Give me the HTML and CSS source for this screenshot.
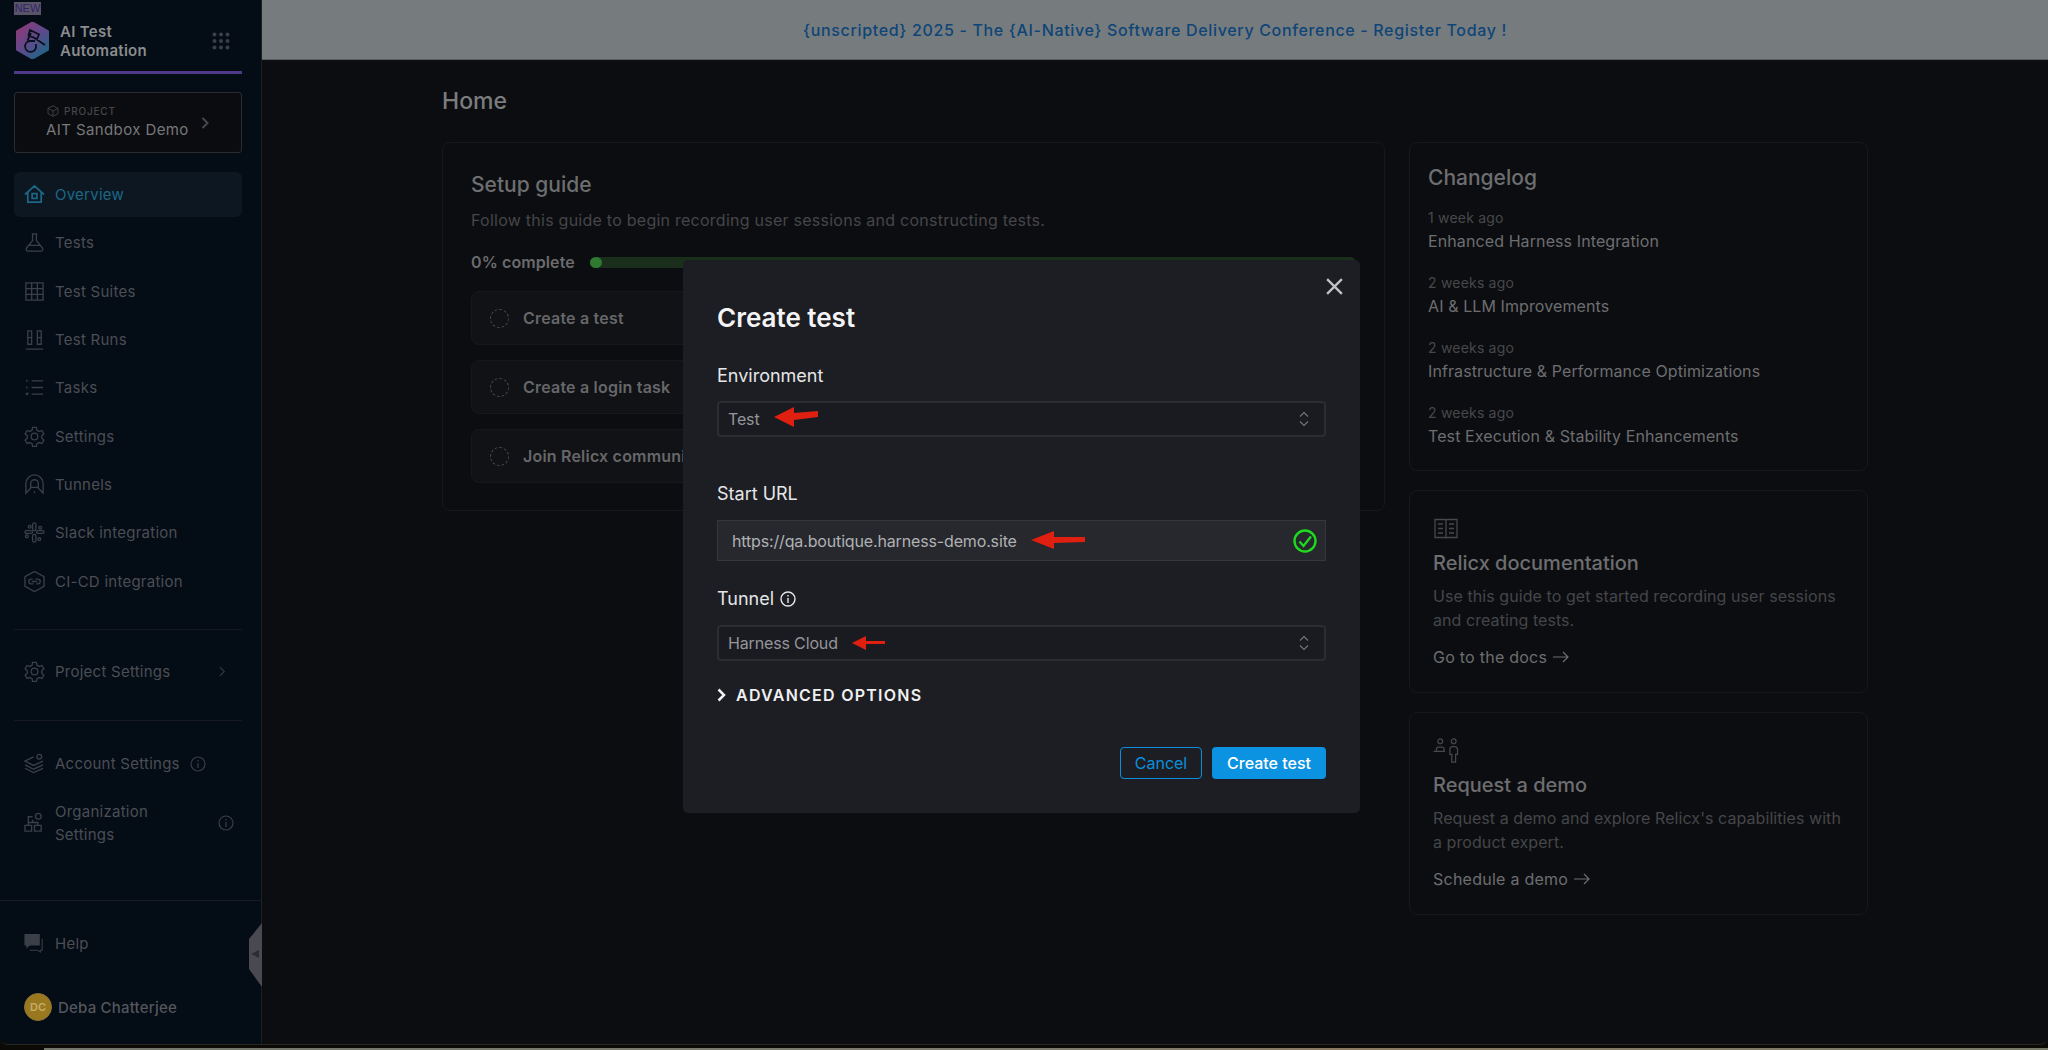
FILE: index.html
```html
<!DOCTYPE html>
<html lang="en">
<head>
  <meta charset="UTF-8">
  <title>AI Test Automation - Home</title>
  <link rel="stylesheet" href="styles.css">
</head>
<body>
  <div class="frame">
    <aside class="sidebar">
      <div class="brand">
        <span class="new-badge">NEW</span>
        <div class="brand-row">
          <svg class="logo" viewBox="0 0 35 37" width="35" height="37">
            <defs>
              <linearGradient id="logoGrad" x1="0.1" y1="0.1" x2="0.8" y2="1">
                <stop offset="0" stop-color="#8a3a78"/>
                <stop offset="0.5" stop-color="#5c4a8c"/>
                <stop offset="1" stop-color="#1f6684"/>
              </linearGradient>
            </defs>
            <path d="M17.500 1 32.500 9.500V27.500L17.500 36 2.500 27.500V9.500Z" fill="url(#logoGrad)" stroke="url(#logoGrad)" stroke-width="3" stroke-linejoin="round"/>
            <path d="M15 8 24 12.500 22 17 13.500 13.500ZM16 11 12.500 18.500M18 15 30 23M20 19H14.500A5.500 5.500 0 1 0 21 25.500V22" fill="none" stroke="#0a111d" stroke-width="1.800"/>
          </svg>
          <div class="brand-name">AI Test<br>Automation</div>
          <svg class="apps" viewBox="0 0 18 18" width="18" height="18">
            <g fill="#3b3f47">
              <circle cx="2.500" cy="2.500" r="2"/><circle cx="9" cy="2.500" r="2"/><circle cx="15.500" cy="2.500" r="2"/>
              <circle cx="2.500" cy="9" r="2"/><circle cx="9" cy="9" r="2"/><circle cx="15.500" cy="9" r="2"/>
              <circle cx="2.500" cy="15.500" r="2"/><circle cx="9" cy="15.500" r="2"/><circle cx="15.500" cy="15.500" r="2"/>
            </g>
          </svg>
        </div>
      </div>

      <div class="project">
        <div class="project-text">
          <div class="project-label">
            <svg viewBox="0 0 12 12" width="12" height="12" fill="none" stroke="#3d3f44">
              <path d="M6 .7 11 3.400v5.200L6 11.300 1 8.600V3.400Z M1 3.400 6 6l5-2.600 M6 6v5.300"/>
            </svg>
            PROJECT
          </div>
          <div class="project-name">AIT Sandbox Demo</div>
        </div>
        <svg class="project-arrow" viewBox="0 0 8 12" width="8" height="12" fill="none" stroke="#45484e" stroke-width="2"><path d="M1.500 1 6.500 6l-5 5"/></svg>
      </div>

      <nav class="nav">
        <a class="nav-item active">
          <svg class="nav-icon" viewBox="0 0 22 22"><path d="M1 11 11 2l10 9M4 9v10h14V9M8.500 10h5v5h-5z"/></svg>
          Overview
        </a>
        <a class="nav-item">
          <svg class="nav-icon" viewBox="0 0 22 22"><path d="M8 2h6M9 2v7L2.500 17a2 2 0 0 0 1.500 3h14a2 2 0 0 0 1.500-3L13 9V2M5.500 14h11"/></svg>
          Tests
        </a>
        <a class="nav-item">
          <svg class="nav-icon" viewBox="0 0 22 22"><path d="M2 2h18v18H2zM8 2v18M14 2v18M2 8h18M2 14h18"/></svg>
          Test Suites
        </a>
        <a class="nav-item">
          <svg class="nav-icon" viewBox="0 0 22 22"><path d="M4 2h4v14H4zM14 2h4v14h-4zM4 9h4M14 9h4M2 21h18"/></svg>
          Test Runs
        </a>
        <a class="nav-item">
          <svg class="nav-icon" viewBox="0 0 22 22"><path d="M8 4h12M8 11h12M8 18h12M3 3v2M3 10v2M2 17l1 1.500 1.500-2"/></svg>
          Tasks
        </a>
        <a class="nav-item">
          <svg class="nav-icon" viewBox="0 0 22 22"><circle cx="11" cy="11" r="3.500"/><path d="M9 1.500h4l.6 3 2.400 1.200 2.800-1 2 3.500-2.200 2v2.600l2.200 2-2 3.500-2.800-1-2.400 1.200-.6 3H9l-.6-3L6 17.300l-2.800 1-2-3.500 2.200-2v-2.600l-2.200-2 2-3.500 2.800 1L8.400 4.500Z"/></svg>
          Settings
        </a>
        <a class="nav-item">
          <svg class="nav-icon" viewBox="0 0 22 22"><path d="M2 20V10a9 9 0 0 1 18 0v10L15 15V10a4 4 0 0 0-8 0v5ZM7 14h8M11 18v2"/></svg>
          Tunnels
        </a>
        <a class="nav-item">
          <svg class="nav-icon" viewBox="0 0 22 22"><rect x="9" y="1" width="3.500" height="8" rx="1.700"/><rect x="1" y="9" width="8" height="3" rx="1.500"/><rect x="13" y="9" width="8" height="3" rx="1.500"/><rect x="9" y="13" width="3.500" height="8" rx="1.700"/><circle cx="6" cy="5" r="1.500"/><circle cx="17" cy="6" r="1.500"/><circle cx="3" cy="15" r="1.500"/><circle cx="16" cy="18" r="1.500"/></svg>
          Slack integration
        </a>
        <a class="nav-item">
          <svg class="nav-icon" viewBox="0 0 22 22"><path d="M11 .5 21 6v10l-10 5.500L1 16V6Z"/><path d="M12 8.500h2.500a2.500 2.500 0 0 1 0 5H13M10 13.500H7.500a2.500 2.500 0 0 1 0-5H9M8 11h6"/></svg>
          CI-CD integration
        </a>
      </nav>

      <div class="rule"></div>
      <a class="nav-item solo">
        <svg class="nav-icon" viewBox="0 0 22 22"><circle cx="11" cy="11" r="3.500"/><path d="M9 1.500h4l.6 3 2.400 1.200 2.800-1 2 3.500-2.200 2v2.600l2.200 2-2 3.500-2.800-1-2.400 1.200-.6 3H9l-.6-3L6 17.300l-2.800 1-2-3.500 2.200-2v-2.600l-2.200-2 2-3.500 2.800 1L8.400 4.500Z"/></svg>
        <span class="grow">Project Settings</span>
        <svg class="more" viewBox="0 0 8 12" width="7" height="11"><path d="M1 1l5 5-5 5"/></svg>
      </a>
      <div class="rule"></div>

      <a class="nav-item account">
        <svg class="nav-icon" viewBox="0 0 22 22"><path d="M10 4 1 8.500l9 4.500 10-4.500M1 12.500 10 17l10-4.500M1 16l9 4.500 10-4.500"/><circle cx="16" cy="4" r="2.500"/></svg>
        Account Settings
        <svg class="info" viewBox="0 0 16 16"><circle cx="8" cy="8" r="7"/><path d="M8 7v5M8 4v1.400"/></svg>
      </a>
      <a class="nav-item org">
        <svg class="nav-icon" viewBox="0 0 22 22"><path d="M1 14h7v6H1zM11 14h7v6h-7zM4.500 14v-3h10v3M9 5H4.500v6M9 11V8"/><circle cx="15" cy="4.500" r="3"/></svg>
        <span class="grow">Organization<br>Settings</span>
        <svg class="info" viewBox="0 0 16 16"><circle cx="8" cy="8" r="7"/><path d="M8 7v5M8 4v1.400"/></svg>
      </a>

      <div class="side-foot">
        <a class="nav-item help">
          <svg class="nav-icon" viewBox="0 0 22 22"><path d="M1 1.500h15v11H6l-3 2.500v-2.500H1z" fill="#3b3f47"/><path d="M19 6v12h-2v2l-3-2H6"/></svg>
          Help
        </a>
        <div class="user">
          <span class="avatar">DC</span>
          <span class="user-name">Deba Chatterjee</span>
        </div>
      </div>
      <div class="collapse"><span class="collapse-tri"></span></div>
    </aside>

    <main class="main">
      <div class="banner">{unscripted} 2025 - The {AI-Native} Software Delivery Conference - Register Today !</div>
      <div class="content">
        <h1 class="page-title">Home</h1>
        <div class="columns">
          <section class="card setup">
            <h2 class="card-title">Setup guide</h2>
            <p class="muted">Follow this guide to begin recording user sessions and constructing tests.</p>
            <div class="progress-row">
              <span class="progress-label">0% complete</span>
              <div class="progress"><span class="progress-dot"></span></div>
            </div>
            <div class="step"><span class="step-circle"></span>Create a test</div>
            <div class="step"><span class="step-circle"></span>Create a login task</div>
            <div class="step"><span class="step-circle"></span>Join Relicx community</div>
          </section>

          <div class="side-col">
            <section class="card changelog">
              <h2 class="card-title">Changelog</h2>
              <div class="log"><span class="log-date">1 week ago</span><span class="log-title">Enhanced Harness Integration</span></div>
              <div class="log"><span class="log-date">2 weeks ago</span><span class="log-title">AI &amp; LLM Improvements</span></div>
              <div class="log"><span class="log-date">2 weeks ago</span><span class="log-title">Infrastructure &amp; Performance Optimizations</span></div>
              <div class="log"><span class="log-date">2 weeks ago</span><span class="log-title">Test Execution &amp; Stability Enhancements</span></div>
            </section>

            <section class="card promo">
              <svg class="promo-icon" viewBox="0 0 26 22"><path d="M2 2h10c.6 0 1 .4 1 1 0-.6.400-1 1-1h10v18H14l-1 .600L12 20H2zM13 3v17M5 6.500h5M5 11h5M5 15.500h5M16 6.500h5M16 11h5M16 15.500h5"/></svg>
              <h3 class="promo-title">Relicx documentation</h3>
              <p class="muted promo-text">Use this guide to get started recording user sessions and creating tests.</p>
              <a class="promo-link">Go to the docs
                <svg class="promo-arrow" viewBox="0 0 16 12"><path d="M0 6h15M10 1l5 5-5 5"/></svg>
              </a>
            </section>

            <section class="card promo">
              <svg class="promo-icon" viewBox="0 0 26 26"><circle cx="7" cy="3.500" r="2.500"/><circle cx="21" cy="3.500" r="2.500"/><path d="M0 14h12M3 14v-2.500a2 2 0 0 1 2-2h4a2 2 0 0 1 2 2V14M17 17v-5a3 3 0 0 1 3-3h2a3 3 0 0 1 3 3v5h-2v8h-4v-8z"/></svg>
              <h3 class="promo-title">Request a demo</h3>
              <p class="muted promo-text">Request a demo and explore Relicx's capabilities with a product expert.</p>
              <a class="promo-link">Schedule a demo
                <svg class="promo-arrow" viewBox="0 0 16 12"><path d="M0 6h15M10 1l5 5-5 5"/></svg>
              </a>
            </section>
          </div>
        </div>
      </div>
    </main>

    <div class="modal">
      <svg class="modal-close" viewBox="0 0 18 18"><path d="M2 2l14 14M16 2 2 16"/></svg>
      <h2 class="modal-title">Create test</h2>

      <label class="field-label env-label">Environment</label>
      <div class="select env-select">
        <span>Test</span>
        <svg class="red-arrow arrow-test" viewBox="0 0 44 24" width="44" height="24"><path d="M0 12 20 2v6l24-2v6l-24 3v7z"/></svg>
        <svg class="updown" viewBox="0 0 10 16"><path d="M1 5.500 5 1.500l4 4M1 10.500l4 4 4-4"/></svg>
      </div>

      <label class="field-label url-label">Start URL</label>
      <div class="input">
        <span>https://qa.boutique.harness-demo.site</span>
        <svg class="red-arrow arrow-url" viewBox="0 0 54 18" width="54" height="18"><path d="M0 9 23 0v6h31v5l-31 1v6z"/></svg>
        <svg class="check" viewBox="0 0 24 24"><circle cx="12" cy="12" r="10.500"/><path d="M6.500 12.500 10.500 17 18 7.500"/></svg>
      </div>

      <label class="field-label tunnel-label">Tunnel
        <svg class="label-info" viewBox="0 0 16 16"><circle cx="8" cy="8" r="7"/><path d="M8 7v5M8 4v1.400"/></svg>
      </label>
      <div class="select">
        <span>Harness Cloud</span>
        <svg class="red-arrow arrow-cloud" viewBox="0 0 33 14" width="33" height="14"><path d="M0 7 14 0v5h19v3H14v6z"/></svg>
        <svg class="updown" viewBox="0 0 10 16"><path d="M1 5.500 5 1.500l4 4M1 10.500l4 4 4-4"/></svg>
      </div>

      <div class="advanced">
        <svg viewBox="0 0 9 14" width="9" height="14"><path d="M1.500 1.500 7 7l-5.500 5.500"/></svg>
        ADVANCED OPTIONS
      </div>

      <div class="modal-actions">
        <button class="btn btn-outline">Cancel</button>
        <button class="btn btn-primary">Create test</button>
      </div>
    </div>
  </div>
  <div class="wallpaper"></div>
</body>
</html>
```

FILE: styles.css
```css
* {
  box-sizing: border-box;
}

html,
body {
  margin: 0;
  height: 1050px;
  overflow: hidden;
}

body {
  font-family: Inter, "Noto Sans", sans-serif;
  background-color: #0b0a07;
  color: #707173;
}

h1,
h2,
h3,
p {
  margin: 0;
}

.frame {
  position: relative;
  display: flex;
  height: 1045px;
  border-radius: 0 0 8px 8px;
  border-bottom: 1px solid #27271f;
  overflow: hidden;
  background-color: #0c0d10;
}

.wallpaper {
  height: 5px;
  margin-left: 44px;
  border-top: 3px solid #0b0a07;
  background: linear-gradient(90deg, #73776c, #7d7b6e 50%, #8a7a62 65%, #777a68);
}

/* sidebar */
.sidebar {
  position: relative;
  flex: 0 0 262px;
  display: flex;
  flex-direction: column;
  padding: 0 19px 0 14px;
  background-color: #040c16;
  border-right: 1px solid #1c1f24;
}

.brand {
  height: 74px;
  border-bottom: 3px solid #4f3a8a;
}

.new-badge {
  display: block;
  width: 27px;
  height: 13px;
  margin-top: 2px;
  background-color: #5a5468;
  color: #33246a;
  font-family: "Liberation Sans", sans-serif;
  font-size: 11px;
  line-height: 13px;
  text-align: center;
}

.brand-row {
  display: flex;
  align-items: center;
  height: 41px;
  margin-top: 5px;
}

.logo {
  flex: none;
  margin-left: 1px;
}

.brand-name {
  flex: 1;
  margin-left: 10px;
  color: #8b8c8e;
  font-size: 15px;
  font-weight: 600;
  line-height: 19px;
  letter-spacing: 0.3px;
}

.apps {
  margin-right: 12px;
}

.project {
  display: flex;
  align-items: center;
  height: 61px;
  margin-top: 18px;
  padding-left: 31px;
  border: 1px solid #2a2c30;
  border-radius: 3px;
  background-color: #0b0c0f;
}

.project-text {
  flex: 1;
}

.project-label {
  display: flex;
  align-items: center;
  gap: 5px;
  margin-left: 1px;
  color: #45474b;
  font-size: 10px;
  font-weight: 500;
  letter-spacing: 0.8px;
}

.project-name {
  margin-top: 3px;
  color: #77787a;
  font-size: 15px;
  letter-spacing: 0.4px;
  line-height: 20px;
}

.project-arrow {
  margin: 0 32px 0 0;
}

.nav {
  display: flex;
  flex-direction: column;
  gap: 3.33px;
  margin-top: 19px;
}

.nav-item {
  display: flex;
  align-items: center;
  gap: 10px;
  height: 45px;
  padding-left: 10px;
  border-radius: 6px;
  color: #4b4e54;
  font-size: 15px;
  letter-spacing: 0.25px;
}

.nav-item.active {
  background-color: #0c1722;
  color: #1c6786;
}

.nav-icon {
  flex: none;
  width: 21px;
  height: 21px;
  fill: none;
  stroke: #3b3f47;
  stroke-width: 1.4;
}

.active .nav-icon {
  stroke: #1c6786;
  stroke-width: 1.8;
}

.rule {
  height: 1px;
  margin: 25px 0 19px;
  background-color: #15191f;
}

.nav-item.solo {
  height: 46px;
}

.solo + .rule {
  margin: 25px 0 20px;
}

.grow {
  flex: 1;
}

.more {
  margin-right: 16px;
  fill: none;
  stroke: #3b3f47;
  stroke-width: 1.2;
}

.info {
  flex: none;
  width: 16px;
  height: 16px;
  fill: none;
  stroke: #3b3f47;
  stroke-width: 1.2;
}

.account {
  height: 46px;
}

.org {
  height: 60px;
  margin-top: 6px;
  line-height: 23px;
}

.org .info {
  margin-right: 8px;
}

.side-foot {
  margin: auto -19px 0 -14px;
  padding: 20px 19px 0 14px;
  height: 144px;
  border-top: 1px solid #1a1e24;
}

.help {
  height: 45px;
}

.help .nav-icon {
  stroke-width: 1.1;
}

.user {
  display: flex;
  align-items: center;
  gap: 6px;
  margin: 27px 0 0 10px;
}

.avatar {
  width: 28px;
  height: 28px;
  border-radius: 50%;
  border: 1px solid #8a7232;
  background-color: #9a7820;
  color: #c5ae68;
  font-size: 11px;
  font-weight: 600;
  line-height: 26px;
  text-align: center;
}

.user-name {
  color: #54565c;
  font-size: 15px;
  font-weight: 500;
  letter-spacing: 0.2px;
}

.collapse {
  position: absolute;
  right: -1px;
  top: 923px;
  width: 13px;
  height: 64px;
  background-color: #4a4952;
  clip-path: polygon(100% 0, 0 25%, 0 72%, 100% 100%);
}

.collapse-tri {
  position: absolute;
  top: 27px;
  left: 2px;
  border: 4px solid transparent;
  border-right: 8px solid #2c2c33;
  border-left: 0;
}

/* main */
.main {
  flex: 1;
  min-width: 0;
}

.banner {
  height: 60px;
  background-color: #767b7e;
  border-bottom: 1px solid #5a5e60;
  color: #0e4577;
  font-size: 16px;
  font-weight: 500;
  letter-spacing: 0.66px;
  line-height: 60px;
  text-align: center;
}

.content {
  width: 1426px;
  margin: 0 auto;
}

.page-title {
  padding-top: 27px;
  color: #7b7c7e;
  font-size: 23px;
  font-weight: 500;
  line-height: 28px;
}

.columns {
  display: flex;
  align-items: flex-start;
  gap: 24px;
  margin-top: 27px;
}

.card {
  border: 1px solid #17181b;
  border-radius: 8px;
}

.setup {
  flex: none;
  width: 943px;
  height: 369px;
  padding: 28px 28px 0;
}

.card-title {
  color: #6d6e70;
  font-size: 21px;
  font-weight: 500;
  line-height: 28px;
}

.muted {
  color: #45464a;
  font-size: 16px;
  letter-spacing: 0.25px;
  line-height: 25px;
}

.setup .muted {
  margin-top: 9px;
}

.progress-row {
  display: flex;
  align-items: center;
  margin-top: 17px;
  height: 24px;
}

.progress-label {
  width: 119px;
  color: #6a6b6d;
  font-size: 16px;
  font-weight: 600;
  letter-spacing: 0.1px;
}

.progress {
  width: 766px;
  height: 11px;
  border-radius: 6px;
  background-color: #1a2f1b;
}

.progress-dot {
  display: block;
  width: 12px;
  height: 11px;
  border-radius: 50%;
  background-color: #2e7a31;
}

.step {
  display: flex;
  align-items: center;
  gap: 14px;
  width: 885px;
  height: 54px;
  margin-top: 15px;
  padding-left: 18px;
  border: 1px solid #17181b;
  border-radius: 8px;
  background-color: #111215;
  color: #66676a;
  font-size: 16px;
  font-weight: 600;
  letter-spacing: 0.2px;
}

.step-circle {
  width: 19px;
  height: 19px;
  border: 1px dashed #4c4d50;
  border-radius: 50%;
}

.progress-row + .step {
  margin-top: 17px;
}

.side-col {
  flex: none;
  width: 459px;
  display: flex;
  flex-direction: column;
  gap: 19px;
}

.changelog {
  height: 329px;
  padding: 21px 18px 0;
}

.log {
  display: flex;
  flex-direction: column;
  margin-top: 14px;
}

.log + .log {
  margin-top: 18px;
}

.log-date {
  color: #47484b;
  font-size: 14px;
  letter-spacing: 0.2px;
  line-height: 23px;
}

.log-title {
  color: #6d6e70;
  font-size: 16px;
  letter-spacing: 0.1px;
  line-height: 24px;
}

.promo {
  height: 203px;
  padding: 25px 18px 0 23px;
}

.promo-icon {
  display: block;
  width: 26px;
  height: 25px;
  fill: none;
  stroke: #47484b;
  stroke-width: 1.300;
}

.promo-title {
  margin-top: 8px;
  color: #6d6e70;
  font-size: 20px;
  font-weight: 500;
  line-height: 28px;
}

.promo-text {
  margin-top: 7px;
  letter-spacing: 0.07px;
  line-height: 24px;
}

.promo-link {
  display: flex;
  align-items: center;
  gap: 6px;
  margin-top: 13px;
  color: #6d6e70;
  font-size: 16px;
  letter-spacing: 0.25px;
  line-height: 24px;
}

.promo-arrow {
  width: 16px;
  height: 12px;
  fill: none;
  stroke: #6d6e70;
  stroke-width: 1.200;
}

/* create test dialog */
.modal {
  position: absolute;
  left: 683px;
  top: 260px;
  width: 677px;
  height: 553px;
  padding: 40px 34px 0;
  border-radius: 5px;
  background-color: #1c1e23;
}

.modal-close {
  position: absolute;
  top: 17px;
  right: 16px;
  width: 19px;
  height: 19px;
  fill: none;
  stroke: #c0c1c3;
  stroke-width: 2.200;
}

.modal-title {
  color: #f4f4f5;
  font-size: 26px;
  font-weight: 600;
  line-height: 36px;
}

.field-label {
  display: flex;
  align-items: center;
  gap: 6px;
  margin-top: 22px;
  color: #e6e6e7;
  font-size: 18px;
  line-height: 24px;
}

.env-label {
  margin-top: 28px;
}

.url-label {
  margin-top: 45px;
}

.tunnel-label {
  margin-top: 26px;
}

.label-info {
  width: 16px;
  height: 16px;
  fill: none;
  stroke: #e6e6e7;
  stroke-width: 1.400;
}

.select,
.input {
  position: relative;
  display: flex;
  align-items: center;
  margin-top: 14px;
  color: #94959a;
  font-size: 16px;
  letter-spacing: -0.15px;
}

.select {
  height: 36px;
  padding-left: 9px;
  border: 2px solid #2b2d32;
  border-radius: 4px;
  background-color: #1a1b20;
}

.env-select {
  margin-top: 13px;
}

.input {
  height: 41px;
  padding-left: 14px;
  border: 1px solid #35373c;
  background-color: #26282d;
  color: #b0b1b4;
}

.updown {
  position: absolute;
  right: 15px;
  width: 10px;
  height: 16px;
  fill: none;
  stroke: #75767a;
  stroke-width: 1.100;
}

.check {
  position: absolute;
  right: 8px;
  width: 24px;
  height: 24px;
  fill: none;
  stroke: #1fd91f;
  stroke-width: 2.400;
}

.red-arrow {
  position: absolute;
  fill: #df2010;
}

.arrow-test {
  left: 55px;
  top: 2px;
}

.arrow-url {
  left: 313px;
  top: 10px;
}

.arrow-cloud {
  left: 133px;
  top: 9px;
}

.advanced {
  display: flex;
  align-items: center;
  gap: 10px;
  margin-top: 22px;
  color: #f0f0f1;
  font-size: 16px;
  font-weight: 600;
  letter-spacing: 1.250px;
  line-height: 24px;
}

.advanced svg {
  fill: none;
  stroke: #f0f0f1;
  stroke-width: 2.500;
}

.modal-actions {
  display: flex;
  justify-content: flex-end;
  gap: 10px;
  margin-top: 40px;
}

.btn {
  height: 32px;
  border-radius: 4px;
  font-family: inherit;
  font-size: 16px;
  font-weight: 500;
  cursor: pointer;
}

.btn-outline {
  width: 82px;
  border: 1px solid #0b8fdc;
  background: none;
  color: #0b8fdc;
  font-weight: 400;
}

.btn-primary {
  width: 114px;
  border: none;
  background-color: #0b92e0;
  color: #fff;
}
```
